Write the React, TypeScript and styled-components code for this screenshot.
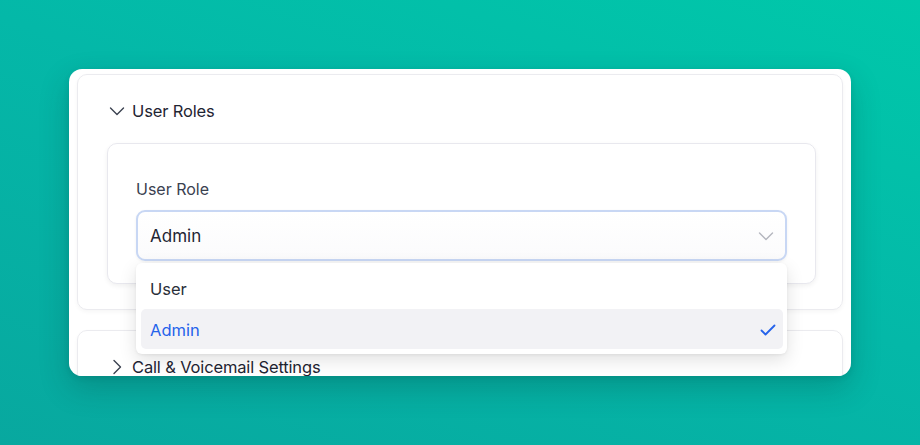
import React from "react";
import styled, { createGlobalStyle } from "styled-components";

const Global = createGlobalStyle`
  html, body { margin: 0; padding: 0; }
  body {
    width: 920px;
    height: 445px;
    overflow: hidden;
    background: linear-gradient(200deg, #00c8aa 0%, #04b8a8 45%, #08a89f 100%);
    font-family: Inter, "Noto Sans", "Liberation Sans", sans-serif;
    -webkit-font-smoothing: antialiased;
  }
`;

const Stage = styled.div`
  padding: 69px 0 0 69px;
`;

const Window = styled.div`
  position: relative;
  width: 782px;
  height: 307px;
  background: #ffffff;
  border-radius: 13px;
  overflow: hidden;
  box-shadow: 0 12px 30px rgba(0, 40, 40, 0.22), 0 2px 6px rgba(0, 0, 0, 0.08);
  padding: 5px 7px 0 8px;
  box-sizing: border-box;
  display: flex;
  flex-direction: column;
  gap: 20px;
`;

const Card = styled.section`
  flex: none;
  width: 766px;
  box-sizing: border-box;
  border: 1px solid #ebebef;
  border-radius: 10px;
  background: #ffffff;
  box-shadow: 0 2px 4px rgba(0, 0, 0, 0.04);
  padding: 24px 26px 25px 29px;
`;

const Header = styled.div`
  display: flex;
  align-items: center;
  gap: 5px;
  height: 24px;
  color: #1f2533;
  font-size: 16.5px;
  font-weight: 400;
  letter-spacing: -0.15px;
`;

const Chevron = styled.svg<{ $open?: boolean }>`
  width: 20px;
  height: 20px;
  color: #3b4150;
  transform: rotate(${(p) => (p.$open ? "0deg" : "-90deg")});
`;

const Panel = styled.div`
  margin-top: 20px;
  border: 1px solid #e8e8ee;
  border-radius: 10px;
  background: #ffffff;
  box-shadow: 0 2px 5px rgba(0, 0, 0, 0.06);
  padding: 35px 28px 22px 28px;
`;

const Label = styled.div`
  font-size: 16px;
  line-height: 20px;
  color: #3a4150;
  margin-bottom: 11px;
`;

const SelectWrap = styled.div`
  position: relative;
`;

const SelectBox = styled.div`
  height: 51px;
  box-sizing: border-box;
  border: 2px solid #c8d7f4;
  border-radius: 9px;
  background: linear-gradient(#ffffff, #fbfbfc);
  display: flex;
  align-items: center;
  justify-content: space-between;
  padding: 0 9px 0 12px;
  font-size: 17px;
  color: #1f2533;
  box-shadow: 0 1px 3px rgba(0, 0, 0, 0.06);
`;

const SmallChevron = styled.svg`
  width: 20px;
  height: 20px;
  color: #b4b6be;
`;

const Menu = styled.div`
  position: absolute;
  top: 53px;
  left: 0;
  width: 651px;
  box-sizing: border-box;
  background: #ffffff;
  border-radius: 6px;
  box-shadow: 0 6px 18px rgba(0, 0, 0, 0.12), 0 1px 3px rgba(0, 0, 0, 0.06);
  padding: 5px 4px 5px 5px;
  z-index: 5;
`;

const Option = styled.div<{ $selected?: boolean }>`
  height: 40px;
  display: flex;
  align-items: center;
  justify-content: space-between;
  padding: 1px 6px 0 9px;
  box-sizing: border-box;
  border-radius: 5px;
  font-size: 16.5px;
  color: ${(p) => (p.$selected ? "#2563eb" : "#2a2f3a")};
  background: ${(p) => (p.$selected ? "#f2f2f5" : "transparent")};
  & + & {
    margin-top: 1px;
  }
`;

const Check = styled.svg`
  width: 18px;
  height: 18px;
  color: #2563eb;
`;

const ChevronPath = () => (
  <path d="M3.5 7l6.5 6.5L16.5 7" fill="none" stroke="currentColor" strokeWidth="1.4" strokeLinecap="round" strokeLinejoin="round" />
);

export default function App() {
  return (
    <>
      <Global />
      <Stage>
        <Window>
          <Card>
            <Header>
              <Chevron $open viewBox="0 0 20 20">
                <ChevronPath />
              </Chevron>
              User Roles
            </Header>
            <Panel>
              <Label>User Role</Label>
              <SelectWrap>
                <SelectBox>
                  Admin
                  <SmallChevron viewBox="0 0 20 20">
                    <ChevronPath />
                  </SmallChevron>
                </SelectBox>
                <Menu>
                  <Option>User</Option>
                  <Option $selected>
                    Admin
                    <Check viewBox="0 0 18 18">
                      <path d="M2.5 9.5l4 4 9-9" fill="none" stroke="currentColor" strokeWidth="1.8" strokeLinecap="round" strokeLinejoin="round" />
                    </Check>
                  </Option>
                </Menu>
              </SelectWrap>
            </Panel>
          </Card>
          <Card>
            <Header>
              <Chevron viewBox="0 0 20 20">
                <ChevronPath />
              </Chevron>
              Call &amp; Voicemail Settings
            </Header>
          </Card>
        </Window>
      </Stage>
    </>
  );
}
